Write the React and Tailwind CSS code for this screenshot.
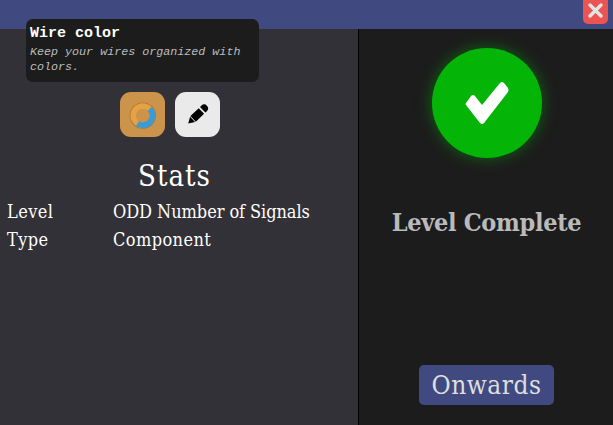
const slab = "font-['Roboto_Slab','DejaVu_Serif_Condensed','DejaVu_Serif',serif] [font-stretch:condensed]";

function Tooltip() {
  return (
    <div className="absolute left-[26px] top-[19px] h-[63px] w-[233px] rounded-[7px] bg-[#1c1c1c] pl-1 pt-[6px] font-['Liberation_Mono',monospace]">
      <div className="text-[15px] font-bold leading-[18px] text-white">Wire color</div>
      <div className="mt-[2px] text-[11.7px] italic leading-[15px] text-[#bdbdbd]">
        Keep your wires organized with
        <br />
        colors.
      </div>
    </div>
  );
}

function WireIcon() {
  return (
    <svg viewBox="0 0 45 45" className="h-full w-full">
      <circle cx="22.8" cy="23.6" r="13.2" fill="#a8783c" />
      <circle cx="22.8" cy="23.6" r="9.4" fill="none" stroke="#e7a042" strokeWidth="6" />
      <path d="M29.7 16.9A9.6 9.6 0 0 1 17.5 31.6" fill="none" stroke="#3c9bd0" strokeWidth="6" />
      <circle cx="22.8" cy="23.6" r="6.6" fill="#cc944a" />
    </svg>
  );
}

function PencilIcon() {
  return (
    <svg viewBox="0 0 45 45" className="h-full w-full">
      <g transform="translate(13.2 31.5) rotate(-43.500)">
        <path d="M0 0L6-3.6V3.6Z" />
        <path d="M6.8-3.9H18.2V3.9H6.8Z" />
        <path d="M20-3.9H22Q25.8-3.9 25.800 0T22 3.9H20Z" />
      </g>
    </svg>
  );
}

function Row({ label, value, spacing }) {
  return (
    <div className="flex h-7 items-center whitespace-nowrap text-[18px] text-white">
      <div className="w-[106px] tracking-[0.4px]">{label}</div>
      <div className={spacing}>{value}</div>
    </div>
  );
}

export default function App() {
  return (
    <div className={`relative flex h-[425px] w-[613px] flex-col overflow-hidden bg-[#1c1c1c] ${slab}`}>
      <header className="flex h-[29px] shrink-0 justify-end bg-[#404a80] pr-[5px]">
        <button className="-mt-1 flex h-7 w-[25px] items-center justify-center rounded-[5px] bg-[#ec5353] pt-px">
          <svg viewBox="0 0 15 15" className="h-[15px] w-[15px]">
            <path d="M2 2L13 13M13 2L2 13" stroke="#e3e3e3" strokeWidth="3.4" strokeLinecap="round" />
          </svg>
        </button>
      </header>
      <main className="flex flex-1">
        <section className="w-[358px] bg-[#323137] pl-[7px] pt-[63px]">
          <div className="flex gap-[10px] pl-[113px]">
            <button className="h-[45px] w-[45px] rounded-[11px] bg-[#cc944a]"><WireIcon /></button>
            <button className="h-[45px] w-[45px] rounded-[11px] bg-[#eaeaea]"><PencilIcon /></button>
          </div>
          <h1 className="mt-[19px] h-10 pr-[16px] text-center text-[29px] leading-10 tracking-[1px] text-white">Stats</h1>
          <div className="mt-px">
            <Row label="Level" value="ODD Number of Signals" spacing="tracking-[-0.07px]" />
            <Row label="Type" value="Component" spacing="tracking-[0.4px]" />
          </div>
        </section>
        <section className="flex w-[255px] flex-col items-center border-l border-black bg-[#1c1c1c] pl-px pt-[19px]">
          <div className="ml-px h-[110px] w-[110px] rounded-full bg-[#04b508] shadow-[0_0_15px_#04b50880]">
            <svg viewBox="0 0 110 110" className="h-full w-full">
              <path d="M34 55L39 48Q41 46 43 48L50 57L68 35Q70 33 72 35L76 40Q77 42 76 44L52 75Q50 77 48 75L34 57Q33 56 34 55Z" fill="white" />
            </svg>
          </div>
          <h2 className="mt-[45px] h-10 whitespace-nowrap text-[25px] font-bold leading-10 tracking-[-0.3px] text-[#bababa]">Level Complete</h2>
          <button className="mt-[122px] h-10 w-[135px] rounded-[5px] bg-[#404a80] text-[26px] leading-[41px] tracking-[0.5px] text-[#dedede]">Onwards</button>
        </section>
      </main>
      <Tooltip />
    </div>
  );
}
